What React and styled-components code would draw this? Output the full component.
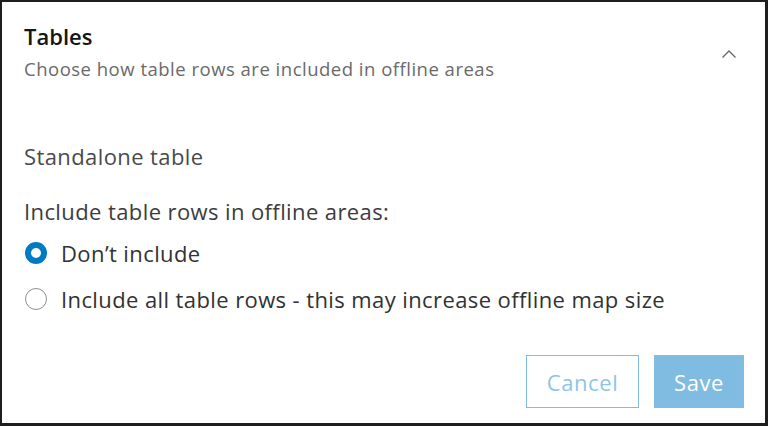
import React from 'react';
import styled, { createGlobalStyle } from 'styled-components';

const GlobalStyle = createGlobalStyle`
    html, body {
        margin: 0;
        padding: 0;
        background: #ffffff;
    }
    * {
        box-sizing: border-box;
    }
`;

const StyledPanel = styled.div`
    width: 768px;
    height: 426px;
    display: flex;
    flex-direction: column;
    background: #ffffff;
    border-style: solid;
    border-color: #1e1e1e;
    border-width: 2px 3px 3px 2px;
    font-family: "Open Sans", "Liberation Sans", sans-serif;
`;

const StyledHeader = styled.div`
    display: flex;
    align-items: center;
    justify-content: space-between;
    padding: 20px 26px 0 22px;
`;

const HeaderText = styled.div`
    display: flex;
    flex-direction: column;
`;

const StyledTitle = styled.h2`
    margin: 0;
    font-size: 22px;
    line-height: 28px;
    font-weight: 600;
    color: #151515;
`;

const StyledSubtitle = styled.p`
    margin: 7px 0 0;
    font-size: 18.5px;
    line-height: 24px;
    letter-spacing: 0.5px;
    color: #6a6a6a;
`;

const ChevronButton = styled.span`
    display: flex;
    width: 20px;
    height: 20px;
    align-items: center;
    justify-content: center;
    margin-top: 4px;
`;

const StyledBody = styled.div`
    flex: 1;
    padding: 62px 22px 0;
    display: flex;
    flex-direction: column;
`;

const SectionTitle = styled.div`
    font-size: 22px;
    line-height: 26px;
    letter-spacing: 0.4px;
    color: #4a4a4a;
`;

const FieldLabel = styled.div`
    margin-top: 29px;
    font-size: 22px;
    line-height: 26px;
    letter-spacing: 0.4px;
    color: #3c3c3c;
`;

const RadioRow = styled.label`
    display: flex;
    align-items: center;
    gap: 14px;
    margin-top: ${props => props.first ? '16px' : '20px'};
    font-size: 22px;
    line-height: 26px;
    letter-spacing: 0.4px;
    color: #323232;
`;

const RadioCircle = styled.span`
    width: 22px;
    height: 22px;
    border-radius: 50%;
    flex-shrink: 0;
    margin-left: 1px;
    border: ${props => props.checked ? '6px solid #007ac2' : '1.5px solid #8f8f8f'};
    background: #ffffff;
`;

const StyledFooter = styled.div`
    display: flex;
    justify-content: flex-end;
    gap: 15px;
    padding: 0 21px 15px 0;
`;

const StyledButton = styled.button`
    height: 53px;
    width: ${props => props.primary ? '90px' : '113px'};
    padding: 0;
    font-family: inherit;
    font-size: 22px;
    letter-spacing: 0.6px;
    border: 1.5px solid #7fbde6;
    background: ${props => props.primary ? '#80bce2' : '#ffffff'};
    color: ${props => props.primary ? '#ffffff' : '#8cc5ea'};
`;

function Chevron() {
    return (
        <svg width="16" height="10" viewBox="0 0 16 10" fill="none">
            <path d="M1.5 8.5 L8 2 L14.5 8.5" stroke="#6a6a6a" strokeWidth="1.4" />
        </svg>
    );
}

function App() {
    return (
        <>
            <GlobalStyle />
            <StyledPanel>
                <StyledHeader>
                    <HeaderText>
                        <StyledTitle>Tables</StyledTitle>
                        <StyledSubtitle>Choose how table rows are included in offline areas</StyledSubtitle>
                    </HeaderText>
                    <ChevronButton><Chevron /></ChevronButton>
                </StyledHeader>
                <StyledBody>
                    <SectionTitle>Standalone table</SectionTitle>
                    <FieldLabel>Include table rows in offline areas:</FieldLabel>
                    <RadioRow first>
                        <RadioCircle checked />
                        Don’t include
                    </RadioRow>
                    <RadioRow>
                        <RadioCircle />
                        Include all table rows - this may increase offline map size
                    </RadioRow>
                </StyledBody>
                <StyledFooter>
                    <StyledButton>Cancel</StyledButton>
                    <StyledButton primary>Save</StyledButton>
                </StyledFooter>
            </StyledPanel>
        </>
    );
}

export default App
